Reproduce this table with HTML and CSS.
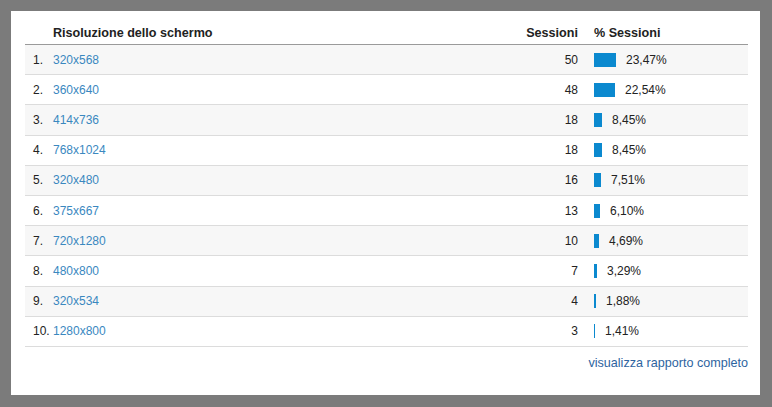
FILE: index.html
```html
<!DOCTYPE html>
<html lang="it">
<head>
<meta charset="utf-8">
<title>Risoluzione dello schermo</title>
<link rel="stylesheet" href="styles.css">
</head>
<body>
<div class="panel">
  <div class="table">
    <div class="row head">
      <span class="num"></span>
      <span class="dim">Risoluzione dello schermo</span>
      <span class="sess">Sessioni</span>
      <span class="pct">% Sessioni</span>
    </div>
    <div class="row odd"><span class="num">1.</span><a class="dim" href="#">320x568</a><span class="sess">50</span><span class="pct"><i class="bar" style="width:22px"></i>23,47%</span></div>
    <div class="row"><span class="num">2.</span><a class="dim" href="#">360x640</a><span class="sess">48</span><span class="pct"><i class="bar" style="width:21px"></i>22,54%</span></div>
    <div class="row odd"><span class="num">3.</span><a class="dim" href="#">414x736</a><span class="sess">18</span><span class="pct"><i class="bar" style="width:8px"></i>8,45%</span></div>
    <div class="row"><span class="num">4.</span><a class="dim" href="#">768x1024</a><span class="sess">18</span><span class="pct"><i class="bar" style="width:8px"></i>8,45%</span></div>
    <div class="row odd"><span class="num">5.</span><a class="dim" href="#">320x480</a><span class="sess">16</span><span class="pct"><i class="bar" style="width:7px"></i>7,51%</span></div>
    <div class="row"><span class="num">6.</span><a class="dim" href="#">375x667</a><span class="sess">13</span><span class="pct"><i class="bar" style="width:6px"></i>6,10%</span></div>
    <div class="row odd"><span class="num">7.</span><a class="dim" href="#">720x1280</a><span class="sess">10</span><span class="pct"><i class="bar" style="width:5px"></i>4,69%</span></div>
    <div class="row"><span class="num">8.</span><a class="dim" href="#">480x800</a><span class="sess">7</span><span class="pct"><i class="bar" style="width:3px"></i>3,29%</span></div>
    <div class="row odd"><span class="num">9.</span><a class="dim" href="#">320x534</a><span class="sess">4</span><span class="pct"><i class="bar" style="width:2px"></i>1,88%</span></div>
    <div class="row"><span class="num">10.</span><a class="dim" href="#">1280x800</a><span class="sess">3</span><span class="pct"><i class="bar" style="width:1px"></i>1,41%</span></div>
  </div>
  <div class="footer"><a href="#">visualizza rapporto completo</a></div>
</div>
</body>
</html>
```
FILE: styles.css
```css
html, body {
  margin: 0;
  padding: 0;
}
body {
  background: #7b7b7b;
  width: 772px;
  height: 407px;
  overflow: hidden;
  font-family: "Liberation Sans", Arial, sans-serif;
  font-size: 12px;
  color: #222;
}
.panel {
  margin: 11px 0 0 11px;
  width: 749px;
  height: 384px;
  background: #fff;
  box-sizing: border-box;
  padding: 0 12px 0 14px;
}
.table {
  display: flex;
  flex-direction: column;
}
.row {
  display: grid;
  grid-template-columns: 20px 1fr 70px 170px;
  align-items: center;
  padding-left: 8px;
  height: 29.2px;
  border-bottom: 1px solid #dcdcdc;
  line-height: 14px;
}
.row.odd {
  background: #f7f7f7;
}
.row.head {
  height: auto;
  padding-top: 15px;
  padding-bottom: 4px;
  border-bottom: 1px solid #9a9a9a;
  font-weight: bold;
  font-size: 12.6px;
  color: #222;
}
.dim {
  color: #3a88bf;
  text-decoration: none;
}
.head .dim {
  color: #222;
}
.sess {
  text-align: right;
}
.pct {
  display: flex;
  align-items: center;
  padding-left: 16px;
}
.bar {
  display: block;
  height: 14px;
  background: #0b89cf;
  margin-right: 10px;
}
.footer {
  display: flex;
  justify-content: flex-end;
  padding-top: 9px;
  line-height: 14px;
}
.footer a {
  color: #2e64a0;
  text-decoration: none;
  font-size: 12.6px;
}
```
